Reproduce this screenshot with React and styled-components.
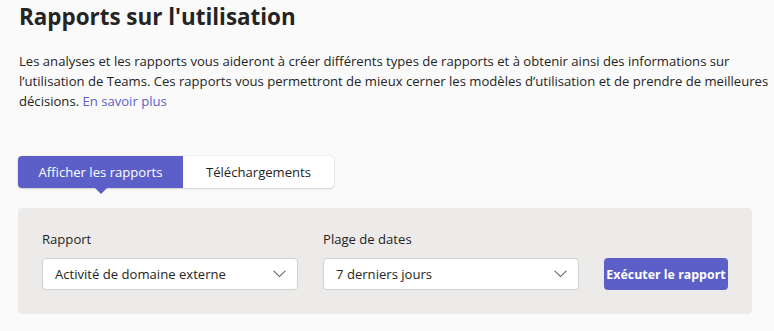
import React from "react";
import styled, { createGlobalStyle } from "styled-components";

const Global = createGlobalStyle`
  html, body { margin: 0; padding: 0; background: #fafafa; }
  body { font-family: "Open Sans", "Noto Sans", sans-serif; color: #242424; }
  * { box-sizing: border-box; }
`;

const Page = styled.main`
  padding: 1px 0 0 18px;
  width: 774px;
  overflow: hidden;
`;

const Title = styled.h1`
  margin: 0 0 0 1px;
  font-size: 22.4px;
  line-height: 32px;
  font-weight: 700;
  color: #242424;
`;

const Intro = styled.p`
  margin: 18px 0 0 1px;
  font-size: 13.1px;
  line-height: 20px;
  color: #242424;
  width: 755px;
`;

const Link = styled.a`
  color: #5b5fc7;
  text-decoration: none;
`;

const Tabs = styled.div`
  margin-top: 45px;
  display: inline-flex;
  height: 32px;
  background: #ffffff;
  border-radius: 4px;
  box-shadow: 0 0 2px rgba(0, 0, 0, 0.12), 0 1px 2px rgba(0, 0, 0, 0.14);
`;

const Tab = styled.button`
  position: relative;
  width: ${(p) => p.$w}px;
  height: 32px;
  border: 0;
  padding: 0;
  margin: 0;
  font-family: inherit;
  font-size: 13.1px;
  display: flex;
  align-items: center;
  justify-content: center;
  background: ${(p) => (p.$active ? "#5b5fc7" : "transparent")};
  color: ${(p) => (p.$active ? "#ffffff" : "#242424")};
  border-radius: ${(p) => (p.$active ? "4px 0 0 4px" : "0 4px 4px 0")};
  cursor: pointer;
`;

const Caret = styled.span`
  position: absolute;
  left: 50%;
  top: 100%;
  margin-left: -6px;
  width: 0;
  height: 0;
  border-left: 6px solid transparent;
  border-right: 6px solid transparent;
  border-top: 6px solid #5b5fc7;
`;

const Panel = styled.section`
  margin-top: 20px;
  width: 734px;
  background: #edebe9;
  border-radius: 4px;
  padding: 21px 24px 24px;
  display: flex;
  align-items: flex-end;
  gap: 25px;
`;

const Field = styled.div`
  display: flex;
  flex-direction: column;
  gap: 9px;
  width: 256px;
`;

const Label = styled.label`
  font-size: 13.1px;
  line-height: 20px;
  color: #242424;
`;

const Select = styled.div`
  height: 32px;
  background: #ffffff;
  border: 1px solid #d1d1d1;
  border-radius: 4px;
  display: flex;
  align-items: center;
  justify-content: space-between;
  padding: 0 11px 0 12px;
  font-size: 13.1px;
  color: #242424;
`;

const Run = styled.button`
  width: 124px;
  height: 32px;
  border: 0;
  border-radius: 4px;
  background: #5b5fc7;
  color: #ffffff;
  font-family: inherit;
  font-weight: 700;
  font-size: 12.4px;
  padding: 0;
  white-space: nowrap;
  cursor: pointer;
`;

const Chevron = () => (
  <svg width="13" height="8" viewBox="0 0 13 8" aria-hidden="true">
    <path d="M0.6 0.8 L6.5 6.6 L12.4 0.8" fill="none" stroke="#616161" strokeWidth="1.1" />
  </svg>
);

export default function App() {
  return (
    <>
      <Global />
      <Page>
        <Title>Rapports sur l'utilisation</Title>
        <Intro>
          Les analyses et les rapports vous aideront à créer différents types de rapports et à obtenir ainsi des informations sur
          l’utilisation de Teams. Ces rapports vous permettront de mieux cerner les modèles d’utilisation et de prendre de meilleures
          décisions. <Link href="#">En savoir plus</Link>
        </Intro>
        <Tabs>
          <Tab $active $w={165}>
            Afficher les rapports
            <Caret />
          </Tab>
          <Tab $w={151}>Téléchargements</Tab>
        </Tabs>
        <Panel>
          <Field>
            <Label>Rapport</Label>
            <Select>
              <span>Activité de domaine externe</span>
              <Chevron />
            </Select>
          </Field>
          <Field>
            <Label>Plage de dates</Label>
            <Select>
              <span>7 derniers jours</span>
              <Chevron />
            </Select>
          </Field>
          <Run>Exécuter le rapport</Run>
        </Panel>
      </Page>
    </>
  );
}
